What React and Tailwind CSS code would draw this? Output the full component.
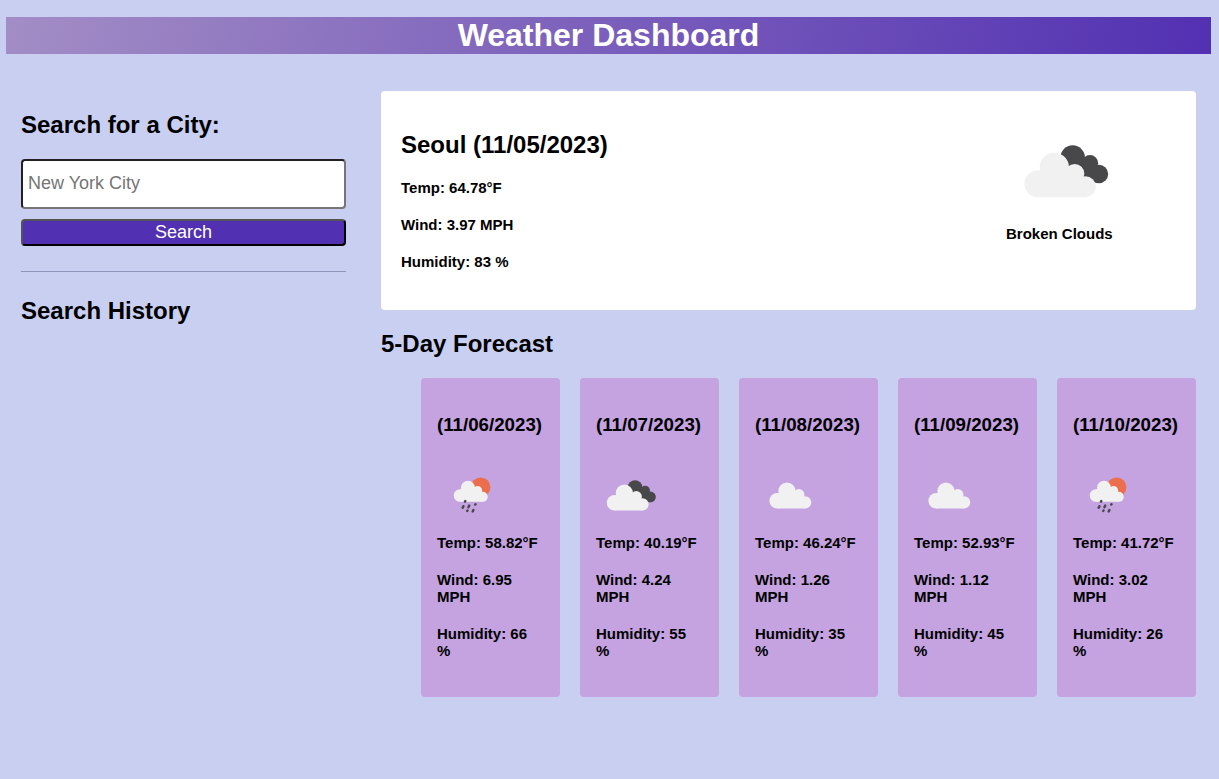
const days = [
  { date: '(11/06/2023)', icon: 'rain', temp: '58.82', wind: '6.95', humidity: 66 },
  { date: '(11/07/2023)', icon: 'broken', temp: '40.19', wind: '4.24', humidity: 55 },
  { date: '(11/08/2023)', icon: 'cloud', temp: '46.24', wind: '1.26', humidity: 35 },
  { date: '(11/09/2023)', icon: 'cloud', temp: '52.93', wind: '1.12', humidity: 45 },
  { date: '(11/10/2023)', icon: 'rain', temp: '41.72', wind: '3.02', humidity: 26 },
];

function Cloud() {
  return (
    <g fill="#f1f1f1">
      <circle cx="83" cy="161.500" r="40" />
      <circle cx="133" cy="112" r="44" />
      <circle cx="194" cy="131" r="29" />
      <circle cx="226" cy="170" r="31.500" />
      <path d="M83 121.500H150L205 130L226 201.500H83Z" />
    </g>
  );
}

function BrokenClouds() {
  return (
    <g>
      <g fill="#48484a">
        <circle cx="188" cy="83" r="37" />
        <circle cx="240" cy="99.500" r="24.500" />
        <circle cx="267" cy="132" r="27.500" />
        <path d="M170 90L215 82L262 125L265 159L210 150Z" />
      </g>
      <Cloud />
    </g>
  );
}

function SmallIcon({ kind }) {
  return (
    <svg className="block h-[70px] w-[70px]" viewBox="0 0 70 70">
      {kind === 'cloud' && (
        <g transform="translate(6 9.2) scale(.195)">
          <Cloud />
        </g>
      )}
      {kind === 'broken' && (
        <g transform="translate(2.4 11.2) scale(.195)">
          <BrokenClouds />
        </g>
      )}
      {kind === 'rain' && (
        <g>
          <circle cx="43.600" cy="27.200" r="9.800" fill="#ec6e4c" />
          <g transform="translate(9.9 9.9) scale(.1585)">
            <Cloud />
          </g>
          <g stroke="#48484a" strokeWidth="2.400" strokeLinecap="round">
            <path d="M28.300 41L28 41.600M26.400 46.200L25.700 47.800M32.200 45.600L31.400 47.200M30.500 50.500L30.200 50.900M36.400 50L35.700 51.500M38.500 44.200L38.200 44.600" />
          </g>
        </g>
      )}
    </svg>
  );
}

export default function App() {
  return (
    <div className="min-h-screen bg-[#c9cff1] pt-[17px] pr-2 pl-1.5 font-['Liberation_Sans',Arial,sans-serif] font-bold text-black">
      <header className="h-[37px] bg-[linear-gradient(100deg,#a38dc5,#5230b2)] text-center text-[32px] leading-[37px] text-white">
        <h1>Weather Dashboard</h1>
      </header>

      <div className="mt-[37px] flex gap-[35px] px-[15px]">
        <aside className="w-[325px] shrink-0 pt-5">
          <h2 className="text-[24px] leading-[27px]">Search for a City:</h2>
          <input
            className="mt-[21px] block h-[50px] w-full rounded border-2 border-[#767676] bg-white pb-0.5 pl-[5px] text-[18px] font-normal [border-style:inset] placeholder:text-[#757575]"
            placeholder="New York City"
          />
          <button className="mt-2.5 block h-[27px] w-full rounded border-2 border-black bg-[#5230b2] text-[18px] leading-[21px] font-normal text-white [border-style:outset]">
            Search
          </button>
          <hr className="mt-[25px] border-t border-[#8e93ba]" />
          <h2 className="mt-[25px] text-[24px] leading-[27px]">Search History</h2>
        </aside>

        <main className="min-w-0 flex-1">
          <section className="flex h-[219px] justify-between rounded bg-white p-5">
            <div className="pt-5">
              <h2 className="text-[24px] leading-[27px]">Seoul (11/05/2023)</h2>
              <div className="mt-[21px] flex flex-col gap-5 text-[15px] leading-[17px]">
                <p>Temp: 64.78°F</p>
                <p>Wind: 3.97 MPH</p>
                <p>Humidity: 83 %</p>
              </div>
            </div>
            <div className="w-[170px]">
              <svg className="block h-[114px] w-[120px]" viewBox="-12 -57 360 342">
                <BrokenClouds />
              </svg>
              <p className="text-[15px] leading-[17px]">Broken Clouds</p>
            </div>
          </section>

          <h2 className="mt-5 text-[24px] leading-[27px]">5-Day Forecast</h2>
          <div className="mt-[21px] grid grid-cols-5 gap-5 pl-10">
            {days.map((day) => (
              <article key={day.date} className="h-[319px] rounded bg-[#c4a3e0] px-4 pt-9">
                <h3 className="text-[18.72px] leading-[21px] whitespace-nowrap">{day.date}</h3>
                <div className="mt-[25px]">
                  <SmallIcon kind={day.icon} />
                </div>
                <div className="mt-1 flex flex-col gap-5 text-[15px] leading-[17px]">
                  <p className="whitespace-nowrap">Temp: {day.temp}°F</p>
                  <p>Wind: {day.wind} MPH</p>
                  <p>Humidity: {day.humidity} %</p>
                </div>
              </article>
            ))}
          </div>
        </main>
      </div>
    </div>
  );
}
